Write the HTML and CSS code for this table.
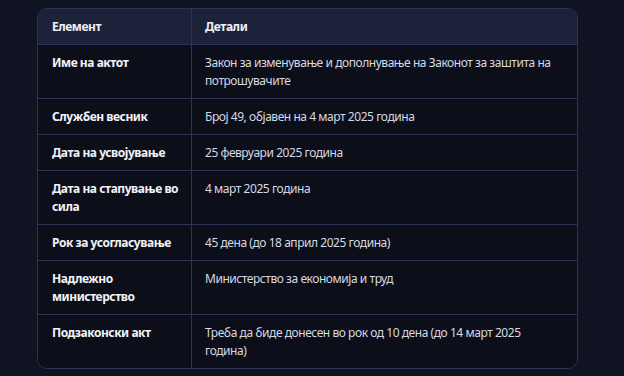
FILE: index.html
```html
<!DOCTYPE html>
<html lang="mk">
<head>
  <meta charset="UTF-8" />
  <title>Закон за заштита на потрошувачите</title>
  <link rel="stylesheet" href="styles.css">
</head>
<body>

  <div class="table-wrap">
    <table class="law-table">
      <thead>
        <tr>
          <th>Елемент</th>
          <th>Детали</th>
        </tr>
      </thead>
      <tbody>
        <tr>
          <td>Име на актот</td>
          <td>Закон за изменување и дополнување на Законот за заштита на потрошувачите</td>
        </tr>
        <tr>
          <td>Службен весник</td>
          <td>Број 49, објавен на 4 март 2025 година</td>
        </tr>
        <tr>
          <td>Дата на усвојување</td>
          <td>25 февруари 2025 година</td>
        </tr>
        <tr>
          <td>Дата на стапување во сила</td>
          <td>4 март 2025 година</td>
        </tr>
        <tr>
          <td>Рок за усогласување</td>
          <td>45 дена (до 18 април 2025 година)</td>
        </tr>
        <tr>
          <td>Надлежно министерство</td>
          <td>Министерство за економија и труд</td>
        </tr>
        <tr>
          <td>Подзаконски акт</td>
          <td>Треба да биде донесен во рок од 10 дена (до 14 март 2025 година)</td>
        </tr>
      </tbody>
    </table>
  </div>

</body>
</html>
```

FILE: styles.css
```css
html, body {
  margin: 0;
  padding: 0;
  background: #0f1322;
  font-family: "Noto Sans", "Open Sans", Arial, sans-serif;
  font-size: 12px;
  letter-spacing: -0.45px;
  color: #d6d9e2;
}
.table-wrap {
  margin: 8px 0 0 37px;
  width: 541px;
  border: 1px solid #2b3356;
  border-radius: 10px;
  overflow: hidden;
  box-sizing: border-box;
}
.law-table {
  width: 100%;
  border-collapse: collapse;
  table-layout: fixed;
}
.law-table th,
.law-table td {
  text-align: left;
  vertical-align: top;
  padding: 9px 20px 8px 13px;
  line-height: 18px;
  border-bottom: 1px solid #2b3356;
}
.law-table th:first-child,
.law-table td:first-child {
  width: 133px;
  padding-left: 14px;
  padding-right: 6px;
  border-right: 1px solid #2b3356;
}
.law-table th {
  background: #1c223a;
  color: #eef0f5;
  font-weight: 700;
}
.law-table td {
  background: #0c0f1a;
}
.law-table td:first-child {
  color: #f2f3f7;
  font-weight: 700;
}
.law-table tbody tr:last-child td {
  border-bottom: none;
}
```
